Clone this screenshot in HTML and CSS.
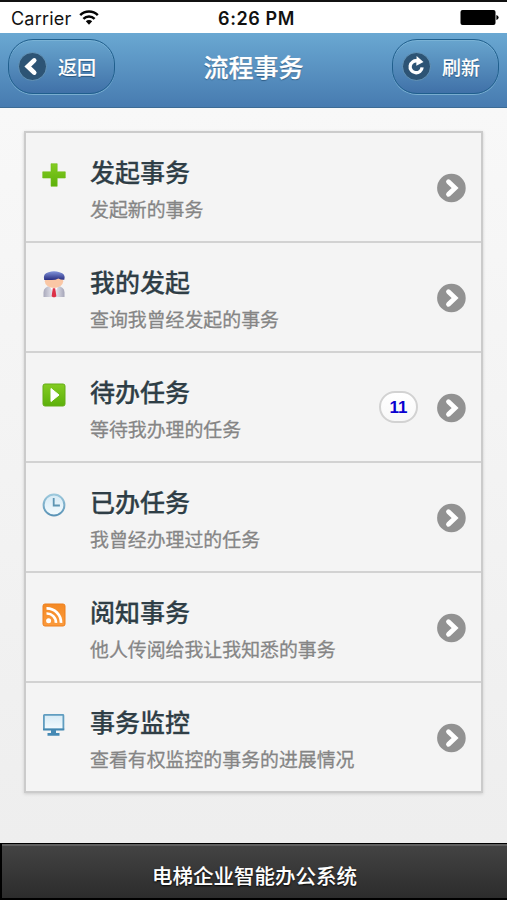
FILE: index.html
```html
<!DOCTYPE html>
<html lang="zh-CN">
<head>
<meta charset="utf-8">
<title>流程事务</title>
<link rel="stylesheet" href="styles.css">
</head>
<body>
<svg class="defs" width="0" height="0" aria-hidden="true">
  <defs>
    <linearGradient id="green" x1="0" y1="0" x2="0" y2="1"><stop offset="0" stop-color="#84cc22"/><stop offset="1" stop-color="#5cb00a"/></linearGradient>
    <linearGradient id="orange" x1="0" y1="0" x2="0" y2="1"><stop offset="0" stop-color="#f48a25"/><stop offset="1" stop-color="#fb9a3c"/></linearGradient>
    <linearGradient id="glass" x1="0" y1="0" x2="0" y2="1"><stop offset="0" stop-color="#d6eaf5"/><stop offset="1" stop-color="#f4fbfe"/></linearGradient>
    <linearGradient id="rim" x1="0" y1="0" x2="0" y2="1"><stop offset="0" stop-color="#9cc8dc"/><stop offset="1" stop-color="#5a93b6"/></linearGradient>
    <linearGradient id="hair" x1="0" y1="0" x2="0" y2="1"><stop offset="0" stop-color="#8294da"/><stop offset="1" stop-color="#272c80"/></linearGradient>
    <linearGradient id="coat" x1="0" y1="0" x2="1" y2="0"><stop offset="0" stop-color="#a9a9bb"/><stop offset=".5" stop-color="#f0f0f6"/><stop offset="1" stop-color="#a5a5b8"/></linearGradient>
    <symbol id="go" viewBox="0 0 30 30"><circle cx="15.4" cy="15" r="14.3" fill="#929292"/><path d="M12.5 8.7 19.1 15l-6.6 6.3" fill="none" stroke="#fff" stroke-width="4.8" stroke-linecap="round"/></symbol>
  </defs>
</svg>
<div class="status">
  <div class="carrier">Carrier
    <svg width="20" height="15" viewBox="0 0 20 15"><g fill="none" stroke="#050505" stroke-width="2.5"><path d="M1.2 5.2a12.5 12.5 0 0 1 17.6 0M4.4 8.8a8 8 0 0 1 11.2 0"/></g><path d="M6.8 11.3a4.6 4.6 0 0 1 6.4 0L10 14.7z" fill="#050505"/></svg>
  </div>
  <div class="time">6:26 PM</div>
  <svg class="battery" width="39" height="17" viewBox="0 0 39 17"><rect x=".5" y="1" width="35" height="15" rx="2" fill="#000"/><path d="M36.4 6q2.2.8 2.2 2.5t-2.2 2.5z" fill="#000"/></svg>
</div>
<header class="header">
  <a class="btn"><svg width="29" height="29" viewBox="0 0 29 29"><circle cx="14.5" cy="14.5" r="14" fill="#2d5475"/><path d="M16.2 8.4 9.8 14.5l6.4 6.1" fill="none" stroke="#fff" stroke-width="4.7" stroke-linecap="round"/></svg><span>返回</span></a>
  <h1>流程事务</h1>
  <a class="btn"><svg width="29" height="29" viewBox="0 0 29 29"><circle cx="14.5" cy="14.5" r="14" fill="#2d5475"/><path d="M15.4 8.9a6 6 0 1 0 4.7 6.4" fill="none" stroke="#fff" stroke-width="3.3"/><path d="M14.6 3.9 21.5 10 14.3 13.7z" fill="#fff"/></svg><span>刷新</span></a>
</header>
<main class="content">
  <ul class="list">
    <li>
      <svg class="icon" viewBox="0 0 24 24"><path d="M9 .7h6.2v8.1h8.1V15h-8.1v8.3H9V15H.7V8.8H9z" fill="url(#green)" stroke="#70bd18" stroke-width=".6"/></svg>
      <div class="text"><h2>发起事务</h2><p>发起新的事务</p></div>
      <svg class="go"><use href="#go"/></svg>
    </li>
    <li>
      <svg class="icon person" viewBox="0 0 24 28"><path d="M1.5 27v-4.5q0-6 7.5-6.5h6q7.5 .5 7.5 6.5V27z" fill="url(#coat)"/><path d="m7.5 16 4.5 8 4.5-8z" fill="#fff"/><path d="m10.8 18.3-1.2 8 1.4 1h2l1.4-1-1.2-8z" fill="#dc3148"/><ellipse cx="12" cy="11.3" rx="9.2" ry="6.6" fill="#fac7a5"/><path d="M2.2 10Q.6 3.6 6.500 2.300q5.500-2 11 0 6.500 1.200 4.800 7.400-3.500.2-6-1.300Q13.500 10.200 9 10q-3.500.2-6.800 0z" fill="url(#hair)"/></svg>
      <div class="text"><h2>我的发起</h2><p>查询我曾经发起的事务</p></div>
      <svg class="go"><use href="#go"/></svg>
    </li>
    <li>
      <svg class="icon" viewBox="0 0 24 24"><rect x="1" y="1" width="22" height="22" rx="2" fill="url(#green)" stroke="#64ad16"/><path d="M9 5.500v13l8-6.500z" fill="#fff" stroke="#fff" stroke-width="1"/></svg>
      <div class="text"><h2>待办任务</h2><p>等待我办理的任务</p></div>
      <span class="badge">11</span>
      <svg class="go"><use href="#go"/></svg>
    </li>
    <li>
      <svg class="icon" viewBox="0 0 24 24"><circle cx="12" cy="12" r="10.4" fill="url(#glass)" stroke="url(#rim)" stroke-width="2"/><path d="M11.7 5v7.5h6.2" fill="none" stroke="#5d95b3" stroke-width="1.8"/></svg>
      <div class="text"><h2>已办任务</h2><p>我曾经办理过的任务</p></div>
      <svg class="go"><use href="#go"/></svg>
    </li>
    <li>
      <svg class="icon" viewBox="0 0 24 24"><rect x="1" y="1" width="22" height="22" rx="2" fill="url(#orange)" stroke="#ed7f1d"/><circle cx="6.6" cy="17.8" r="2.5" fill="#fff"/><path d="M4.5 10.5a9 9 0 0 1 9.4 9.4M4.5 5.4a14.2 14.2 0 0 1 14.5 14.5" fill="none" stroke="#fff" stroke-width="2.7"/></svg>
      <div class="text"><h2>阅知事务</h2><p>他人传阅给我让我知悉的事务</p></div>
      <svg class="go"><use href="#go"/></svg>
    </li>
    <li>
      <svg class="icon" viewBox="0 0 24 24"><path d="M9 16h5v4h3.5v2.8h-12V20H9z" fill="#4589b4"/><rect x="1.9" y="1.9" width="19.5" height="14.5" rx=".5" fill="url(#glass)" stroke="#609dc0" stroke-width="1.8"/><path d="M1 16.5h21.3" stroke="#4488b1" stroke-width="1.8"/></svg>
      <div class="text"><h2>事务监控</h2><p>查看有权监控的事务的进展情况</p></div>
      <svg class="go"><use href="#go"/></svg>
    </li>
  </ul>
</main>
<footer class="footer">电梯企业智能办公系统</footer>
</body>
</html>
```
FILE: styles.css
```css
* { box-sizing: border-box; }
body {
  margin: 0;
  height: 900px;
  overflow: hidden;
  display: flex;
  flex-direction: column;
  font-family: "Liberation Sans", "Noto Sans CJK SC", sans-serif;
  font-weight: 500;
}
.defs { position: absolute; }
h1, h2, p, ul { margin: 0; padding: 0; }
.status {
  height: 33px;
  flex: none;
  border-top: 2px solid #111;
  background: #fff;
  display: grid;
  grid-template-columns: 1fr auto 1fr;
  align-items: center;
  padding: 0 8px 0 11px;
  font-family: Inter, sans-serif;
  color: #111;
}
.carrier { display: flex; align-items: center; gap: 8px; padding-top: 2px; font-size: 18px; font-weight: 400; letter-spacing: .2px; }
.carrier svg { margin-top: -2px; }
.time { font-weight: 600; font-size: 18px; letter-spacing: .6px; padding: 2px 0 0 3px; }
.battery { justify-self: end; }
.header {
  height: 75px;
  flex: none;
  display: flex;
  justify-content: space-between;
  align-items: flex-start;
  padding: 6px 8px 0;
  background: linear-gradient(#6aa8d2, #477bb0);
  border-bottom: 1px solid #3c6b95;
  color: #fff;
  text-shadow: 0 1px 1px #29557c;
}
.header h1 { font-size: 25px; line-height: 58px; font-weight: 500; -webkit-text-stroke: .25px #fff; }
.btn {
  width: 107px;
  height: 55px;
  border: 1.5px solid #205f8d;
  border-radius: 25px;
  background: linear-gradient(#68a5ce, #4071a8);
  box-shadow: 0 1px 0 #79aed0, inset 0 1px 0 #79b2d5;
  display: flex;
  align-items: center;
  gap: 11px;
  padding-left: 9px;
  font-size: 19px;
  -webkit-text-stroke: .1px #fff;
}
.btn svg circle { stroke: #6f9fc3; stroke-width: .8; }
.content {
  flex: 1;
  min-height: 0;
  padding: 23px 24px 0;
  background: linear-gradient(#f8f8f8, #eee);
}
.list {
  list-style: none;
  height: 662px;
  display: grid;
  grid-template-rows: repeat(5, 110px) 1fr;
  border: 2px solid #cbcbcb;
  background: #f4f4f4;
  box-shadow: 0 1px 3px #ccc;
}
.list li {
  display: flex;
  align-items: center;
  padding: 0 15px 0 16px;
  border-bottom: 2px solid #d2d2d2;
}
.list li:last-child { border-bottom: 0; }
.icon { width: 24px; height: 24px; flex: none; align-self: flex-start; margin-top: 30px; }
.person { height: 28px; margin-top: 27px; }
.text { flex: 1; margin-left: 24px; align-self: flex-start; padding-top: 21px; white-space: nowrap; }
.text h2 { font-size: 25px; line-height: 38px; font-weight: 500; color: #2f3e46; text-shadow: 0 1px 0 #fff; -webkit-text-stroke: .25px #2f3e46; }
.text p { margin-top: 2px; font-size: 18.9px; line-height: 34px; font-weight: 400; color: #858585; text-shadow: 0 1px 0 #fff; -webkit-text-stroke: .3px #858585; }
.go { width: 30px; height: 30px; flex: none; position: relative; top: 1px; }
.badge {
  width: 39px;
  height: 32px;
  margin-right: 18px;
  border: 2px solid #d2d2d2;
  border-radius: 16px;
  background: linear-gradient(#fff, #f8f8f8);
  color: #0a00d0;
  font-size: 17px;
  font-weight: 700;
  line-height: 29px;
  text-align: center;
}
.footer {
  height: 57px;
  flex: none;
  border: solid #000;
  border-width: 1px 0 2px 2px;
  background: linear-gradient(#444, #2c2c2c);
  box-shadow: inset 0 2px 0 #606060;
  color: #fff;
  font-size: 20.5px;
  line-height: 66px;
  text-align: center;
  text-shadow: 0 1px 2px #000;
  -webkit-text-stroke: .1px #fff;
}
```
